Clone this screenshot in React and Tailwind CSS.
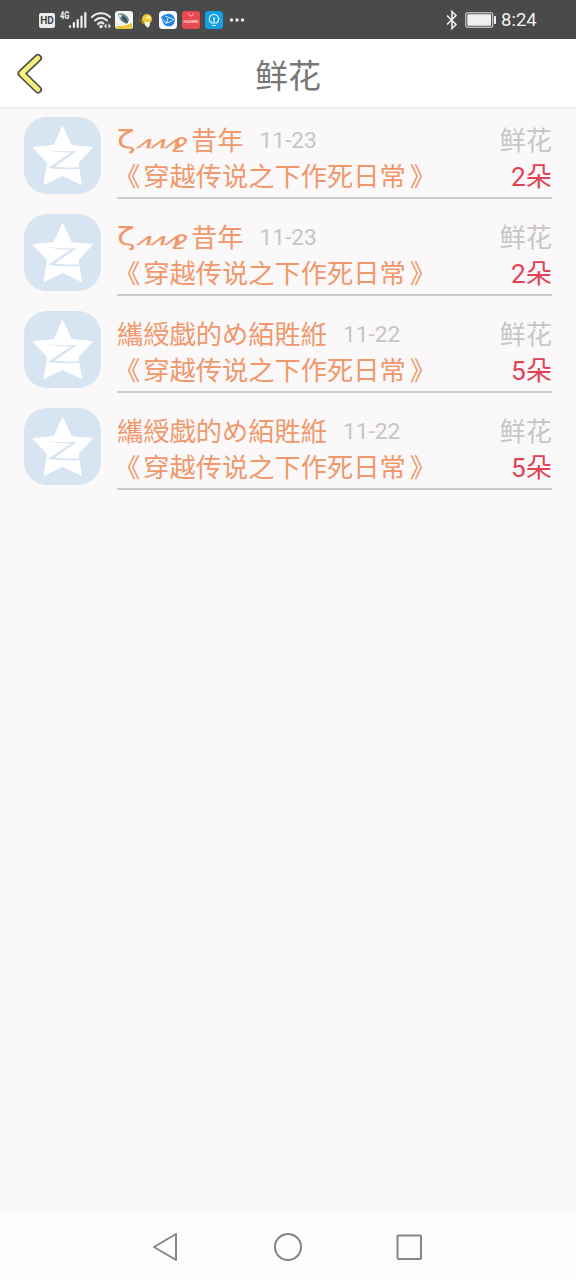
import React from "react";

const records = [
  { user: "昔年", flourish: true, date: "11-23", count: 2 },
  { user: "昔年", flourish: true, date: "11-23", count: 2 },
  { user: "纗綬戯的め絔貹絍", flourish: false, date: "11-22", count: 5 },
  { user: "纗綬戯的め絔貹絍", flourish: false, date: "11-22", count: 5 },
];

function StatusBar() {
  return (
    <div className="h-[39px] bg-[#4a4a4a] flex items-center text-[#f0f0f0] pl-[39px] pr-[39px]">
      <div className="w-4 h-[15px] mt-0.5 rounded-[2px] bg-[#ececec] text-[#444] text-[10px] leading-[15px] font-bold text-center">
        HD
      </div>
      <div className="ml-[5px] w-[10px] h-[19px] text-[10px] leading-[11px] font-bold">
        <span className="block origin-left scale-x-75">4G</span>
      </div>
      <svg width="18" height="18" viewBox="0 0 18 18" className="ml-[-1px]">
        <g fill="#eee">
          <rect x="0" y="14" width="2" height="3" rx="1" />
          <rect x="3.8" y="11" width="2.2" height="6" rx="1" />
          <rect x="7.6" y="8" width="2.2" height="9" rx="1" />
          <rect x="11.4" y="4.5" width="2.2" height="12.5" rx="1" />
          <rect x="15.2" y="1" width="2.2" height="16" rx="1" />
        </g>
      </svg>
      <svg width="21" height="18" viewBox="0 0 21 18" className="ml-1">
        <g fill="none" stroke="#eee" strokeWidth="2" strokeLinecap="round">
          <path d="M1 6C6 1 14 1 19 6" />
          <path d="M4 9.5C8 6 12 6 16 9.5" />
          <path d="M7 13C9 11 11 11 12.5 12.5" />
        </g>
        <circle cx="10" cy="15.5" r="1.8" fill="#eee" />
        <path d="M13 15l2.5-2.5v5zM20 15l-2.5-2.5v5z" fill="#eee" />
      </svg>
      <svg width="18" height="18" viewBox="0 0 18 18" className="ml-[3px]">
        <rect width="18" height="18" rx="3" fill="#f5f6f1" />
        <path d="M3 3c4-2 9 0 11 6l-2 4C8 12 4 9 3 3z" fill="#728b91" />
        <path d="M7 5c3 0 5 3 6 7-4-1-6-3-6-7z" fill="#36545e" />
        <circle cx="5" cy="5" r="1.4" fill="#dce9ea" />
        <path d="M1 15c5 0 9 0 16-3v3c0 2-1 3-3 3H4c-2 0-3-1-3-3z" fill="#e9c63f" />
        <path d="M1 12c3-1 5 1 8 2l-8 1z" fill="#edf3e1" />
      </svg>
      <svg width="18" height="18" viewBox="0 0 18 18" className="ml-1">
        <circle cx="10" cy="8" r="5" fill="#e9c83e" />
        <path d="M8 6l4-1 2 2-3 1z" fill="#fff3a2" />
        <path d="M7 11l6 0 0 3-2 3-3-3z" fill="#fff2dc" />
        <path d="M4 10l3 1-1 2zM3 2l1 1M2 9l1 0" stroke="#bb981e" fill="none" />
      </svg>
      <svg width="18" height="18" viewBox="0 0 18 18" className="ml-1">
        <rect width="18" height="18" rx="3.5" fill="#f7fbff" />
        <circle cx="9.5" cy="9" r="6.3" fill="#2485d8" />
        <path d="M4 9c3 4 7 3 11-1M6 5l8 3M9 7l-2 6" stroke="#e8f5ff" strokeWidth="0.9" fill="none" />
        <path d="M2 7l4-3M11 15l4-3" stroke="#2485d8" strokeWidth="1.5" />
      </svg>
      <div className="ml-[5px] w-[18px] h-[18px] rounded-[3px] bg-[#e8494f] flex flex-col items-center">
        <svg width="8" height="7" viewBox="0 0 8 7">
          <path d="M1.5 2c0 4 5 4 5 0" stroke="#ffb6b4" fill="none" />
        </svg>
        <span className="text-[4px] leading-[7px] font-bold text-[#ffdad8]">HUAWEI</span>
      </div>
      <svg width="18" height="18" viewBox="0 0 18 18" className="ml-[5px]">
        <rect width="18" height="18" rx="3.5" fill="#159fe5" />
        <path d="M6.5 12C2.5 9 4.5 3.5 9 3.5S15.5 9 11.5 12zM7 14.5h4M9 8v4" stroke="#dff5ff" strokeWidth="1.2" fill="none" />
        <circle cx="9" cy="7.5" r="1" fill="#fff" />
      </svg>
      <svg width="16" height="4" viewBox="0 0 16 4" className="ml-[6px]">
        <g fill="#eee">
          <circle cx="2.5" cy="2" r="1.7" />
          <circle cx="8" cy="2" r="1.7" />
          <circle cx="13.5" cy="2" r="1.7" />
        </g>
      </svg>
      <svg width="12" height="20" viewBox="0 0 12 20" className="ml-auto">
        <path d="M1 5.5l9 9-4 4v-17l4 4-9 9" stroke="#eee" strokeWidth="1.6" fill="none" />
      </svg>
      <svg width="31" height="16" viewBox="0 0 31 16" className="ml-[7px]">
        <rect x="0.7" y="0.7" width="27" height="14.6" rx="2" stroke="#b8b8b8" strokeWidth="1.4" fill="none" />
        <rect x="2.3" y="2.3" width="23.8" height="11.4" rx="1" fill="#f1f1f1" />
        <rect x="29" y="4" width="2" height="8" rx="0.6" fill="#eee" />
      </svg>
      <span className="ml-[5px] w-[36px] text-[18.5px] leading-[37px] pt-0.5 whitespace-nowrap">
        8:24
      </span>
    </div>
  );
}

function Header() {
  return (
    <div className="h-[70px] bg-white border-b-2 border-[#f1eff0] flex items-center">
      <div className="w-[60px] pl-4 pt-0.5">
        <svg width="28" height="42" viewBox="0 0 28 42">
          <path d="M22 5L5.5 20.5l16.5 16" fill="none" stroke="#50504a" strokeWidth="8" strokeLinecap="round" strokeLinejoin="round" />
          <path d="M22 5L5.5 20.5l16.5 16" fill="none" stroke="#f9ef7c" strokeWidth="4.6" strokeLinecap="round" strokeLinejoin="round" />
        </svg>
      </div>
      <div className="flex-1 text-center text-[33px] leading-[66px] text-[#777] pt-[8px]">鲜花</div>
      <div className="w-[60px]"></div>
    </div>
  );
}

function Avatar() {
  return (
    <svg width="77" height="77" viewBox="0 0 77 77" className="shrink-0">
      <rect width="77" height="77" rx="23" fill="#d7e4f1" />
      <path
        d="M38.5 9.500l9 19 21 2-14.500 15.500 3.500 21.500-19-9-18.500 9 3.500-21.500L9 30.500l21-2z"
        fill="#fff"
        stroke="#fff"
        strokeLinejoin="round"
      />
      <path d="M23 33q14 2 30 1L31 49.500q12 2 26 0.500l-2 2q-17 1-31-1L47 35.500q-14 0-24-2.500z" fill="#d7e4f1" />
    </svg>
  );
}

// decorative characters in front of the nickname
function Flourish() {
  return (
    <span className="inline-flex h-[36px] w-[74px] font-['DejaVu_Sans']">
      <span className="w-[19px] text-[25px] leading-[34px]">
        <span className="inline-block origin-left scale-x-[1.35] skew-x-3">ζ</span>
      </span>
      <span className="w-[38px] text-[16px] leading-[40px]">
        <span className="inline-block origin-bottom-left -skew-x-[28deg] scale-x-[1.48] ml-[-12px] [-webkit-text-stroke:0.5px]">
          ʌʌʌ
        </span>
      </span>
      <span className="w-[17px] text-[19px] leading-[36px]">
        <span className="inline-block origin-left -skew-x-12 scale-x-[1.35] [-webkit-text-stroke:0.3px]">ջ</span>
      </span>
    </span>
  );
}

function Record({ item }) {
  return (
    <div className="flex h-[97px] pl-6 pr-6">
      <Avatar />
      <div className="ml-4 flex-1 h-[82px] border-b-2 border-[#cecccd] text-[26.25px] leading-[36px] whitespace-nowrap">
        <div className="flex h-[36px] mt-[6px]">
          <div className="flex text-[#f0986c]">
            {item.flourish && <Flourish />}
            <span>{item.user}</span>
          </div>
          <span className="ml-4 text-[22.7px] leading-[35px] text-[#c7c5c6]">{item.date}</span>
          <span className="ml-auto text-[#c7c5c6]">鲜花</span>
        </div>
        <div className="flex justify-between h-[36px]">
          <span className="text-[#f0986c]">
            <span className="-ml-[3px] mr-[3px]">《</span>穿越传说之下作死日常
            <span className="ml-1">》</span>
          </span>
          <span className="text-[#e14256]">{item.count}朵</span>
        </div>
      </div>
    </div>
  );
}

export default function App() {
  return (
    <div className="w-[576px] h-[1280px] flex flex-col bg-[#faf8f9] overflow-hidden font-[Roboto,'Noto_Sans_CJK_SC',sans-serif]">
      <StatusBar />
      <Header />
      <div className="flex-1 pt-2">
        {records.map((item, idx) => (
          <Record key={idx} item={item} />
        ))}
      </div>
      <div className="h-[66px] bg-[#fcfcfc] flex items-center pl-[152px] pr-[153px] justify-between">
        <svg width="27" height="30" viewBox="0 0 27 30">
          <path d="M24 2v26L2 15z" fill="none" stroke="#858585" strokeWidth="2" strokeLinejoin="round" />
        </svg>
        <svg width="30" height="30" viewBox="0 0 30 30">
          <circle cx="15" cy="15" r="13" fill="none" stroke="#858585" strokeWidth="2" />
        </svg>
        <svg width="27" height="27" viewBox="0 0 27 27">
          <rect x="1.5" y="1.5" width="23.5" height="23.5" rx="1" fill="none" stroke="#858585" strokeWidth="2" />
        </svg>
      </div>
    </div>
  );
}
